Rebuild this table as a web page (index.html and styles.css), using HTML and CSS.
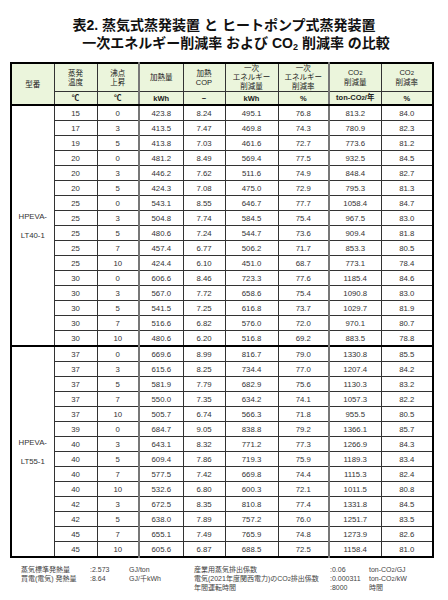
FILE: index.html
```html
<!DOCTYPE html>
<html lang="ja">
<head>
<meta charset="utf-8">
<link rel="stylesheet" href="styles.css">
</head>
<body>
<div class="page">
  <h1 class="title">
    <span class="title-line">表2. 蒸気式蒸発装置 と ヒートポンプ式蒸発装置</span>
    <span class="title-line second">一次エネルギー削減率 および CO<sub>2</sub> 削減率 の比較</span>
  </h1>
  <table class="tbl">
    <colgroup>
      <col class="c1"><col class="c2"><col class="c3"><col class="c4"><col class="c5"><col class="c6"><col class="c7"><col class="c8"><col class="c9">
    </colgroup>
    <thead>
      <tr class="h1">
        <th rowspan="2">型番</th>
        <th>蒸発<br>温度</th>
        <th class="sep">沸点<br>上昇</th>
        <th>加熱量</th>
        <th>加熱<br>COP</th>
        <th>一次<br>エネルギー<br>削減量</th>
        <th class="sep">一次<br>エネルギー<br>削減率</th>
        <th>CO<small>2</small><br>削減量</th>
        <th>CO<small>2</small><br>削減率</th>
      </tr>
      <tr class="h2">
        <th>℃</th><th class="sep">℃</th><th>kWh</th><th>−</th><th>kWh</th><th class="sep">%</th><th>ton-CO<small>2</small>/年</th><th>%</th>
      </tr>
    </thead>
    <tbody class="grp">
      <tr><td class="model" rowspan="16">HPEVA-<br>LT40-1</td><td>15</td><td class="sep">0</td><td>423.8</td><td>8.24</td><td>495.1</td><td class="sep">76.8</td><td>813.2</td><td>84.0</td></tr>
      <tr><td>17</td><td class="sep">3</td><td>413.5</td><td>7.47</td><td>469.8</td><td class="sep">74.3</td><td>780.9</td><td>82.3</td></tr>
      <tr><td>19</td><td class="sep">5</td><td>413.8</td><td>7.03</td><td>461.6</td><td class="sep">72.7</td><td>773.6</td><td>81.2</td></tr>
      <tr><td>20</td><td class="sep">0</td><td>481.2</td><td>8.49</td><td>569.4</td><td class="sep">77.5</td><td>932.5</td><td>84.5</td></tr>
      <tr><td>20</td><td class="sep">3</td><td>446.2</td><td>7.62</td><td>511.6</td><td class="sep">74.9</td><td>848.4</td><td>82.7</td></tr>
      <tr><td>20</td><td class="sep">5</td><td>424.3</td><td>7.08</td><td>475.0</td><td class="sep">72.9</td><td>795.3</td><td>81.3</td></tr>
      <tr><td>25</td><td class="sep">0</td><td>543.1</td><td>8.55</td><td>646.7</td><td class="sep">77.7</td><td>1058.4</td><td>84.7</td></tr>
      <tr><td>25</td><td class="sep">3</td><td>504.8</td><td>7.74</td><td>584.5</td><td class="sep">75.4</td><td>967.5</td><td>83.0</td></tr>
      <tr><td>25</td><td class="sep">5</td><td>480.6</td><td>7.24</td><td>544.7</td><td class="sep">73.6</td><td>909.4</td><td>81.8</td></tr>
      <tr><td>25</td><td class="sep">7</td><td>457.4</td><td>6.77</td><td>506.2</td><td class="sep">71.7</td><td>853.3</td><td>80.5</td></tr>
      <tr><td>25</td><td class="sep">10</td><td>424.4</td><td>6.10</td><td>451.0</td><td class="sep">68.7</td><td>773.1</td><td>78.4</td></tr>
      <tr><td>30</td><td class="sep">0</td><td>606.6</td><td>8.46</td><td>723.3</td><td class="sep">77.6</td><td>1185.4</td><td>84.6</td></tr>
      <tr><td>30</td><td class="sep">3</td><td>567.0</td><td>7.72</td><td>658.6</td><td class="sep">75.4</td><td>1090.8</td><td>83.0</td></tr>
      <tr><td>30</td><td class="sep">5</td><td>541.5</td><td>7.25</td><td>616.8</td><td class="sep">73.7</td><td>1029.7</td><td>81.9</td></tr>
      <tr><td>30</td><td class="sep">7</td><td>516.6</td><td>6.82</td><td>576.0</td><td class="sep">72.0</td><td>970.1</td><td>80.7</td></tr>
      <tr><td>30</td><td class="sep">10</td><td>480.6</td><td>6.20</td><td>516.8</td><td class="sep">69.2</td><td>883.5</td><td>78.8</td></tr>
    </tbody>
    <tbody class="grp">
      <tr><td class="model" rowspan="14">HPEVA-<br>LT55-1</td><td>37</td><td class="sep">0</td><td>669.6</td><td>8.99</td><td>816.7</td><td class="sep">79.0</td><td>1330.8</td><td>85.5</td></tr>
      <tr><td>37</td><td class="sep">3</td><td>615.6</td><td>8.25</td><td>734.4</td><td class="sep">77.0</td><td>1207.4</td><td>84.2</td></tr>
      <tr><td>37</td><td class="sep">5</td><td>581.9</td><td>7.79</td><td>682.9</td><td class="sep">75.6</td><td>1130.3</td><td>83.2</td></tr>
      <tr><td>37</td><td class="sep">7</td><td>550.0</td><td>7.35</td><td>634.2</td><td class="sep">74.1</td><td>1057.3</td><td>82.2</td></tr>
      <tr><td>37</td><td class="sep">10</td><td>505.7</td><td>6.74</td><td>566.3</td><td class="sep">71.8</td><td>955.5</td><td>80.5</td></tr>
      <tr><td>39</td><td class="sep">0</td><td>684.7</td><td>9.05</td><td>838.8</td><td class="sep">79.2</td><td>1366.1</td><td>85.7</td></tr>
      <tr><td>40</td><td class="sep">3</td><td>643.1</td><td>8.32</td><td>771.2</td><td class="sep">77.3</td><td>1266.9</td><td>84.3</td></tr>
      <tr><td>40</td><td class="sep">5</td><td>609.4</td><td>7.86</td><td>719.3</td><td class="sep">75.9</td><td>1189.3</td><td>83.4</td></tr>
      <tr><td>40</td><td class="sep">7</td><td>577.5</td><td>7.42</td><td>669.8</td><td class="sep">74.4</td><td>1115.3</td><td>82.4</td></tr>
      <tr><td>40</td><td class="sep">10</td><td>532.6</td><td>6.80</td><td>600.3</td><td class="sep">72.1</td><td>1011.5</td><td>80.8</td></tr>
      <tr><td>42</td><td class="sep">3</td><td>672.5</td><td>8.35</td><td>810.8</td><td class="sep">77.4</td><td>1331.8</td><td>84.5</td></tr>
      <tr><td>42</td><td class="sep">5</td><td>638.0</td><td>7.89</td><td>757.2</td><td class="sep">76.0</td><td>1251.7</td><td>83.5</td></tr>
      <tr><td>45</td><td class="sep">7</td><td>655.1</td><td>7.49</td><td>765.9</td><td class="sep">74.8</td><td>1273.9</td><td>82.6</td></tr>
      <tr><td>45</td><td class="sep">10</td><td>605.6</td><td>6.87</td><td>688.5</td><td class="sep">72.5</td><td>1158.4</td><td>81.0</td></tr>
    </tbody>
  </table>
  <div class="notes">
    <span>蒸気標準発熱量</span><span>:2.573</span><span>GJ/ton</span>
    <span>産業用蒸気排出係数</span><span>:0.06</span><span>ton-CO<small>2</small>/GJ</span>
    <span>買電(電気) 発熱量</span><span>:8.64</span><span>GJ/千kWh</span>
    <span>電気(2021年度関西電力)のCO<small>2</small>排出係数</span><span>:0.000311</span><span>ton-CO<small>2</small>/kW</span>
    <span></span><span></span><span></span>
    <span>年間運転時間</span><span>:8000</span><span>時間</span>
  </div>
</div>
</body>
</html>
```
FILE: styles.css
```css
html, body {
  margin: 0;
  padding: 0;
  background: #fff;
}
.page {
  width: 448px;
  height: 600px;
  overflow: hidden;
  font-family: "Liberation Sans", "Noto Sans CJK JP", sans-serif;
  color: #222;
}
.title {
  margin: 0;
  padding-top: 16px;
  height: 62px;
  box-sizing: border-box;
  font-size: 14px;
  line-height: 18px;
  font-weight: bold;
  color: #111;
  text-align: center;
  display: flex;
  flex-direction: column;
  align-items: center;
}
.title-line {
  display: block;
  white-space: nowrap;
}
.title-line.second {
  padding-left: 24px;
}
.title sub {
  font-size: 9px;
  vertical-align: -2px;
  line-height: 0;
}
.tbl {
  margin-left: 10px;
  border-collapse: collapse;
  table-layout: fixed;
  width: 423px;
  border: 2px solid #000;
}
.c1 { width: 43px; }
.c2 { width: 43px; }
.c3 { width: 42px; }
.c4 { width: 44px; }
.c5 { width: 42px; }
.c6 { width: 53px; }
.c7 { width: 51px; }
.c8 { width: 52px; }
.c9 { width: 52px; }
.tbl th, .tbl td {
  border: 1px solid #333;
  padding: 0;
  text-align: center;
  vertical-align: middle;
  overflow: hidden;
  white-space: nowrap;
}
.tbl th {
  background: #ebf5dc;
  font-weight: normal;
  font-size: 7.5px;
  line-height: 9px;
  color: #222;
}
.tbl th small, .notes small {
  font-size: 0.8em;
}
.tbl .h1 th {
  height: 27px;
}
.tbl .h2 th {
  height: 12px;
  font-weight: bold;
  border-bottom: 2px solid #000;
}
.tbl td {
  height: 14px;
  font-size: 7.8px;
  line-height: 9px;
  color: #333;
}
.tbl .sep {
  border-right: 2px solid #777;
}
.tbl .grp {
  border-top: 2px solid #000;
}
.tbl td.model {
  line-height: 19px;
  font-size: 7.8px;
  border-right: 1px solid #333;
}
.notes {
  margin-top: 7px;
  margin-left: 21px;
  display: grid;
  grid-template-columns: 69px 39px 65px 136px 39px auto;
  grid-auto-rows: 9px;
  font-size: 7px;
  line-height: 9px;
  color: #444;
  white-space: nowrap;
}
```
